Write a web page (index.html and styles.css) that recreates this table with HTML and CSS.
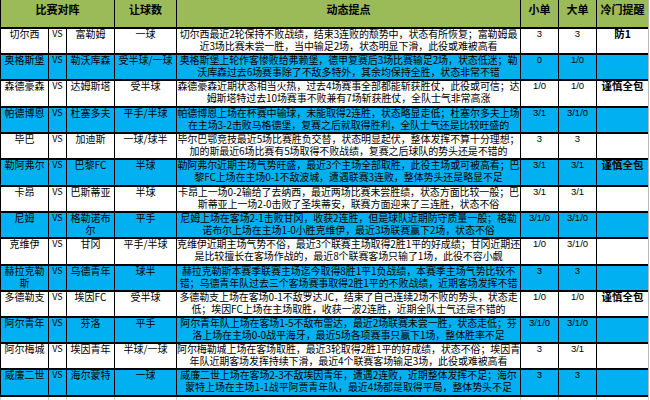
FILE: index.html
```html
<!DOCTYPE html>
<html lang="zh-CN">
<head>
<meta charset="utf-8">
<title>比赛对阵</title>
<link rel="stylesheet" href="styles.css">
</head>
<body>
<div class="sheet">
  <div class="c hd span3">比赛对阵</div>
  <div class="c hd">让球数</div>
  <div class="c hd">动态提点</div>
  <div class="c hd">小单</div>
  <div class="c hd">大单</div>
  <div class="c hd">冷门提醒</div>

  <div class="c w nm">切尔西</div><div class="c w vs">VS</div><div class="c w nm">富勒姆</div><div class="c w hc">一球</div>
  <div class="c w dyn">切尔西最近2轮保持不败战绩，结束3连败的颓势中，状态有所恢复；富勒姆最<br>近3场比赛未尝一胜，当中输足2场，状态明显下滑，此役或难被高看</div>
  <div class="c w num">3</div><div class="c w num">3</div><div class="c w tip">防1</div>

  <div class="c b nm">奥格斯堡</div><div class="c b vs">VS</div><div class="c b nm">勒沃库森</div><div class="c b hc">受半球/一球</div>
  <div class="c b dyn">奥格斯堡上轮作客惨败给弗赖堡，德甲复赛后3场比赛输足2场，状态低迷；勒<br>沃库森过去6场赛事除了不敌多特外，其余均保持全胜，状态非常不错</div>
  <div class="c b num">0</div><div class="c b num">1/0</div><div class="c b tip"></div>

  <div class="c w nm">森德豪森</div><div class="c w vs">VS</div><div class="c w nm">达姆斯塔</div><div class="c w hc">受半球</div>
  <div class="c w dyn">森德豪森近期状态相当火热，过去4场赛事全部都能斩获胜仗，此役或可信；达<br>姆斯塔特过去10场赛事不败兼有7场斩获胜仗，全队士气非常高涨</div>
  <div class="c w num">1/0</div><div class="c w num">1/0</div><div class="c w tip">谨慎全包</div>

  <div class="c b nm">帕德博恩</div><div class="c b vs">VS</div><div class="c b nm">杜塞多夫</div><div class="c b hc">平手/半球</div>
  <div class="c b dyn">帕德博恩上场在杯赛中输球，未能取得2连胜，状态略显走低；杜塞尔多夫上场<br>在主场3-2击败马格德堡，复赛之后就取得胜利，全队士气还是比较旺盛的</div>
  <div class="c b num">3/1</div><div class="c b num">3/1/0</div><div class="c b tip"></div>

  <div class="c w nm">毕巴</div><div class="c w vs">VS</div><div class="c w nm">加迪斯</div><div class="c w hc">一球/球半</div>
  <div class="c w dyn">毕尔巴鄂竞技最近5场比赛胜负交替，状态明显起伏，整体发挥不算十分理想；<br>加的斯最近6场比赛有5场取得不败战绩，复赛之后球队的势头还是不错的</div>
  <div class="c w num">3</div><div class="c w num">3</div><div class="c w tip"></div>

  <div class="c b nm">勒阿弗尔</div><div class="c b vs">VS</div><div class="c b nm">巴黎FC</div><div class="c b hc">半球</div>
  <div class="c b dyn">勒阿弗尔近期主场气势旺盛，最近3个主场全部取胜，此役主场或可被高看；巴<br>黎FC上场在主场0-1不敌波城，遭遇联赛3连败，整体势头还是略显不足</div>
  <div class="c b num">3/1</div><div class="c b num">3/1</div><div class="c b tip">谨慎全包</div>

  <div class="c w nm">卡昂</div><div class="c w vs">VS</div><div class="c w nm">巴斯蒂亚</div><div class="c w hc">半球</div>
  <div class="c w dyn">卡昂上一场0-2输给了去纳西，最近两场比赛未尝胜绩，状态方面比较一般；巴<br>斯蒂亚上一场2-0击败了圣埃蒂安，联赛方面迎来了三连胜，状态不俗</div>
  <div class="c w num">3/1</div><div class="c w num">3/1</div><div class="c w tip"></div>

  <div class="c b nm">尼姆</div><div class="c b vs">VS</div><div class="c b nm">格勒诺布尔</div><div class="c b hc">平手</div>
  <div class="c b dyn">尼姆上场在客场2-1击败甘冈，收获2连胜，但是球队近期防守质量一般；格勒<br>诺布尔上场在主场1-0小胜克维伊，最近3场联赛赢下2场，状态不俗</div>
  <div class="c b num">3/1/0</div><div class="c b num">3/1/0</div><div class="c b tip"></div>

  <div class="c w nm">克维伊</div><div class="c w vs">VS</div><div class="c w nm">甘冈</div><div class="c w hc">平手/半球</div>
  <div class="c w dyn">克维伊近期主场气势不俗，最近3个联赛主场取得2胜1平的好成绩；甘冈近期还<br>是比较擅长在客场作战的，最近8个联赛客场只输了1场，此役不容小觑</div>
  <div class="c w num">1/0</div><div class="c w num">3/1/0</div><div class="c w tip"></div>

  <div class="c b nm">赫拉克勒斯</div><div class="c b vs">VS</div><div class="c b nm">乌德青年</div><div class="c b hc">球半</div>
  <div class="c b dyn">赫拉克勒斯本赛季联赛主场迄今取得8胜1平1负战绩，本赛季主场气势比较不<br>错；乌德青年队过去三个客场赛事取得2胜1平的不败战绩，近期客场发挥不错</div>
  <div class="c b num">3</div><div class="c b num">3</div><div class="c b tip"></div>

  <div class="c w nm">多德勒支</div><div class="c w vs">VS</div><div class="c w nm">埃因FC</div><div class="c w hc">受半球</div>
  <div class="c w dyn">多德勒支上场在客场0-1不敌罗达JC，结束了自己连续2场不败的势头，状态走<br>低；埃因FC上场在主场取胜，收获一波2连胜，近期全队士气还是不错的</div>
  <div class="c w num">1/0</div><div class="c w num">1/0</div><div class="c w tip">谨慎全包</div>

  <div class="c b nm">阿尔青年</div><div class="c b vs">VS</div><div class="c b nm">芬洛</div><div class="c b hc">平手</div>
  <div class="c b dyn">阿尔青年队上场在客场1-5不敌布雷达，最近2场联赛未尝一胜，状态走低；芬<br>洛上场在主场0-0战平海牙，最近5场各项赛事只赢下1场，整体胜率不足</div>
  <div class="c b num">3/1/0</div><div class="c b num">3/1/0</div><div class="c b tip"></div>

  <div class="c w nm">阿尔梅城</div><div class="c w vs">VS</div><div class="c w nm">埃因青年</div><div class="c w hc">半球/一球</div>
  <div class="c w dyn">阿尔梅勒城上场在客场取胜，最近3轮取得2胜1平的好成绩，状态不俗；埃因青<br>年队近期客场发挥持续下滑，最近4个联赛客场输足3场，此役或难被高看</div>
  <div class="c w num">3</div><div class="c w num">3/1</div><div class="c w tip"></div>

  <div class="c b nm">威廉二世</div><div class="c b vs">VS</div><div class="c b nm">海尔蒙特</div><div class="c b hc">一球</div>
  <div class="c b dyn">威廉二世上场在客场2-3不敌埃因青年，遭遇2连败，近期整体发挥不足；海尔<br>蒙特上场在主场1-1战平阿贾青年队，最近4场都是取得平局，整体势头不足</div>
  <div class="c b num">3</div><div class="c b num">3</div><div class="c b tip"></div>
</div>
<div class="tail">
  <div></div><div></div><div></div><div></div><div></div><div></div><div></div><div></div>
</div>
</body>
</html>
```

FILE: styles.css
```css
html, body {
  margin: 0;
  padding: 0;
  background: #fff;
}

body {
  width: 650px;
  height: 400px;
  overflow: hidden;
  font-family: "Noto Sans CJK SC", "Noto Sans", sans-serif;
  color: #000;
}

.sheet {
  display: grid;
  grid-template-columns: 47px 17px 47px 61px 343px 37px 37px 51px;
  grid-template-rows: 27px 24px 24px 25px 24px 24px 25px 24px 24px 25px 24px 24px 24px 24px 25px;
  gap: 2px 1px;
  background: #000;
  padding: 0 0 2px 1px;
  border-right: 1px solid #b8b8b8;
  width: max-content;
}

.c {
  font-size: 10px;
  line-height: 12px;
  text-align: center;
  white-space: nowrap;
}

.c::before {
  content: "";
  display: block;
  margin-top: -1px;
}

.w { background: #fff; }
.b { background: #00b0f0; }

.hd {
  background: #9bbb59;
  font-size: 11px;
  font-weight: bold;
  line-height: 15px;
  padding-top: 2px;
}

.hd::before { margin-top: 0; }

.span3 { grid-column: span 3; }

.nm {
  white-space: normal;
  word-break: break-all;
}

.vs {
  font-size: 9px;
}

.dyn {
  letter-spacing: -0.1px;
}

.num {
  font-family: "Liberation Sans", Arial, sans-serif;
  font-size: 9.5px;
}

.tip {
  font-weight: bold;
  font-size: 10.5px;
}

.tail {
  display: grid;
  grid-template-columns: 47px 17px 47px 61px 343px 37px 37px 51px;
  column-gap: 1px;
  background: #d4d4d4;
  padding-left: 1px;
  border-right: 1px solid #d4d4d4;
  width: max-content;
  height: 3px;
}

.tail > div { background: #fff; }
```
